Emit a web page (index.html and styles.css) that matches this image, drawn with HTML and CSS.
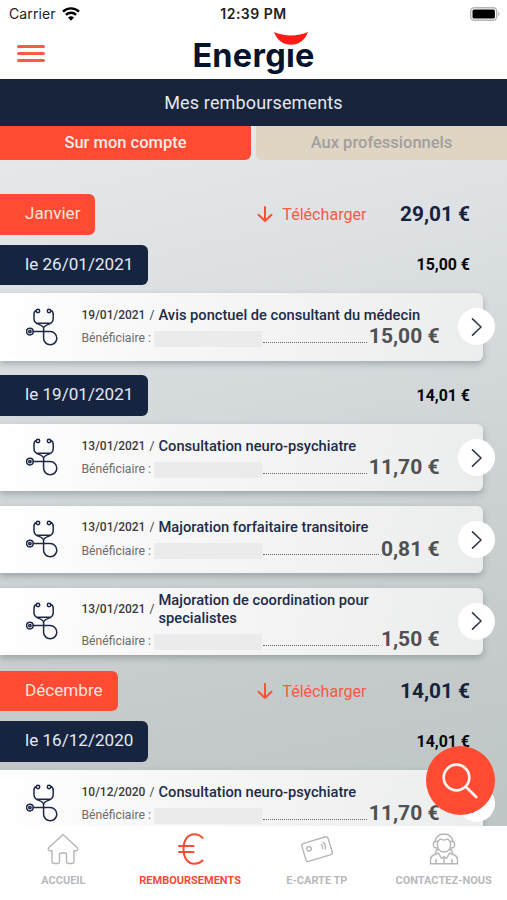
FILE: index.html
```
<!DOCTYPE html>
<html lang="fr">
<head>
    <meta charset="utf-8">
    <title>Mes remboursements</title>
    <link rel="stylesheet" href="styles.css">
</head>
<body>
    <svg class="sprite">
        <symbol id="stethoscope" viewBox="0 0 32 38">
            <circle cx="12" cy="3" r="1.7"/>
            <circle cx="23" cy="3" r="1.7"/>
            <path d="M10.400 2.400C8.400 2.700 8 4.600 8 6.500v4.300c0 3 2.200 4.700 4.800 5.600 2.500.9 4.800 1.900 4.800 4.200 0-2.300 2.300-3.300 4.800-4.200 2.600-.9 4.800-2.600 4.800-5.600V6.500c0-1.900-.4-3.800-2.400-4.100M11.500 15.300h12.200M17.600 20v10.200a6.600 6.600 0 1 0 6.600-6.600H7.300"/>
            <circle cx="3.900" cy="23.600" r="3.300"/>
            <circle cx="3.900" cy="23.600" r="1.200"/>
        </symbol>
        <symbol id="chevron" viewBox="0 0 12 20">
            <path d="M1.500 1.800l8.500 8.200-8.500 8.200"/>
        </symbol>
        <symbol id="download" viewBox="0 0 16 18">
            <path d="M8 2v14M1.500 9.800L8 16l6.500-6.200"/>
        </symbol>
    </svg>

    <div class="status-bar">
        <span class="carrier">Carrier
            <svg class="wifi" viewBox="0 0 18 14">
                <path d="M1 4.700a11.300 11.300 0 0 1 16 0M3.900 7.800a7.200 7.200 0 0 1 10.200 0"/>
                <path class="solid" d="M9 13.800l-3-3.200a4.300 4.300 0 0 1 6 0z"/>
            </svg>
        </span>
        <span class="time">12:39 PM</span>
        <span class="battery">
            <svg viewBox="0 0 30 14">
                <rect x=".7" y=".7" width="26" height="12.600" rx="3.500" fill="#fff" stroke="#b5b5b5" stroke-width="1.400"/>
                <rect x="2.500" y="2.500" width="22.400" height="9" rx="1.500"/>
                <path d="M28.200 4.800c1.600.6 1.600 3.800 0 4.400z" fill="#b5b5b5"/>
            </svg>
        </span>
    </div>

    <header class="header">
        <button class="menu-btn"><span></span><span></span><span></span></button>
        <div class="logo">
            Energıe
            <svg class="smile" viewBox="0 0 34 13"><path d="M0 0c10 4.500 24 4.500 34 0-3 8.500-9.500 12.800-17 12.800S3 8.500 0 0z"/></svg>
        </div>
    </header>

    <h1 class="page-title">Mes remboursements</h1>

    <main class="content">
        <div class="tabs">
            <button class="tab active">Sur mon compte</button>
            <button class="tab">Aux professionnels</button>
        </div>

        <div class="month">
            <span class="tag month-tag">Janvier</span>
            <a class="download"><svg><use href="#download"/></svg>Télécharger</a>
            <span class="month-total">29,01 €</span>
        </div>
        <div class="day">
            <span class="tag day-tag">le 26/01/2021</span>
            <span class="day-total">15,00 €</span>
        </div>
        <div class="card">
            <svg class="care-icon"><use href="#stethoscope"/></svg>
            <div class="card-body">
                <div class="card-title"><span class="date">19/01/2021 <i>/</i></span><span class="care">Avis ponctuel de consultant du médecin</span></div>
                <div class="card-line"><span class="label">Bénéficiaire :</span><span class="mask"></span><span class="dots"></span><span class="amount">15,00 €</span></div>
            </div>
            <button class="more"><svg><use href="#chevron"/></svg></button>
        </div>

        <div class="day">
            <span class="tag day-tag">le 19/01/2021</span>
            <span class="day-total">14,01 €</span>
        </div>
        <div class="card">
            <svg class="care-icon"><use href="#stethoscope"/></svg>
            <div class="card-body">
                <div class="card-title"><span class="date">13/01/2021 <i>/</i></span><span class="care">Consultation neuro-psychiatre</span></div>
                <div class="card-line"><span class="label">Bénéficiaire :</span><span class="mask"></span><span class="dots"></span><span class="amount">11,70 €</span></div>
            </div>
            <button class="more"><svg><use href="#chevron"/></svg></button>
        </div>
        <div class="card">
            <svg class="care-icon"><use href="#stethoscope"/></svg>
            <div class="card-body">
                <div class="card-title"><span class="date">13/01/2021 <i>/</i></span><span class="care">Majoration forfaitaire transitoire</span></div>
                <div class="card-line"><span class="label">Bénéficiaire :</span><span class="mask"></span><span class="dots"></span><span class="amount">0,81 €</span></div>
            </div>
            <button class="more"><svg><use href="#chevron"/></svg></button>
        </div>
        <div class="card">
            <svg class="care-icon"><use href="#stethoscope"/></svg>
            <div class="card-body two-lines">
                <div class="card-title"><span class="date">13/01/2021 <i>/</i></span><span class="care">Majoration de coordination pour<br>specialistes</span></div>
                <div class="card-line"><span class="label">Bénéficiaire :</span><span class="mask"></span><span class="dots"></span><span class="amount">1,50 €</span></div>
            </div>
            <button class="more"><svg><use href="#chevron"/></svg></button>
        </div>

        <div class="month">
            <span class="tag month-tag">Décembre</span>
            <a class="download"><svg><use href="#download"/></svg>Télécharger</a>
            <span class="month-total">14,01 €</span>
        </div>
        <div class="day">
            <span class="tag day-tag">le 16/12/2020</span>
            <span class="day-total">14,01 €</span>
        </div>
        <div class="card">
            <svg class="care-icon"><use href="#stethoscope"/></svg>
            <div class="card-body">
                <div class="card-title"><span class="date">10/12/2020 <i>/</i></span><span class="care">Consultation neuro-psychiatre</span></div>
                <div class="card-line"><span class="label">Bénéficiaire :</span><span class="mask"></span><span class="dots"></span><span class="amount">11,70 €</span></div>
            </div>
            <button class="more"><svg><use href="#chevron"/></svg></button>
        </div>
    </main>

    <button class="search-btn">
        <svg viewBox="0 0 36 36"><circle cx="14.500" cy="14.500" r="12.800"/><path d="M23.800 23.800L34.200 34"/></svg>
    </button>

    <nav class="nav">
        <a class="nav-item">
            <svg viewBox="0 0 32 32"><path d="M16 1.500L2 14.500c-1.600 1.600-.6 3.300 1 3.300h2v10.400c0 1.400.8 2.300 2.200 2.300h3.600c1.200 0 1.700-.7 1.700-1.700v-7.300c0-.9.5-1.500 1.500-1.500h4c1 0 1.500.6 1.500 1.500v7.300c0 1 .5 1.700 1.700 1.700h3.600c1.400 0 2.200-.9 2.200-2.300V17.800h2c1.600 0 2.600-1.700 1-3.300z"/></svg>
            ACCUEIL
        </a>
        <a class="nav-item active">
            <svg class="euro" viewBox="0 0 32 32"><path d="M28.500 4.800C26 2.200 23.500 1.200 20.500 1.200c-7 0-11 6-11 14.800s4 14.800 11 14.800c3 0 5.500-.8 8-3.300M5 13h14.500M5 19h14.500"/></svg>
            REMBOURSEMENTS
        </a>
        <a class="nav-item">
            <svg viewBox="0 0 32 32"><g transform="rotate(-17 16 16)"><rect x="2.300" y="6.800" width="27.400" height="18.600" rx="2"/><circle cx="8.500" cy="13.500" r="2.200"/><path d="M21.500 13q1.400 2 0 4M23.800 11.500q2.400 3.500 0 7"/></g></svg>
            E-CARTE TP
        </a>
        <a class="nav-item">
            <svg viewBox="0 0 32 32"><path d="M7 8.500C8 4 11.500 1 16 1s8 3 9 7.500M9.500 10.500c0-3 1.500-3.500 3-4.500 2.300 1.300 4.700 1.300 7 0 1.500 1 3 1.500 3 4.500v2.500c0 3.500-3 6-6.500 6s-6.500-2.500-6.500-6zM9.500 8.500H8C6.300 8.500 5.300 10 5.300 11.500s1 3.500 2.700 3.500h1.500M22.500 8.500H24c1.700 0 2.700 1.500 2.700 3s-1 3.500-2.700 3.500h-1.500M10 16.500c-2 .5-2.500 2-2.500 4.500M22 16.500c2 .5 2.500 2 2.500 4.500M10.500 20L5.500 22C3.500 23 2.500 24.500 2.500 27v3.800h27V27c0-2.500-1-4-3-5l-5-2M10.500 20l3 5.500 2.500-2 2.500 2 3-5.500M16 23.500v7M8 26.500v4M24 26.500v4"/></svg>
            CONTACTEZ-NOUS
        </a>
    </nav>
</body>
</html>
```

FILE: styles.css
```
* {
    box-sizing: border-box;
}
body {
    margin: 0;
    width: 507px;
    height: 900px;
    overflow: hidden;
    display: flex;
    flex-direction: column;
    background: #fff;
    font-family: Roboto, sans-serif;
    position: relative;
}
button {
    border: none;
    padding: 0;
    font-family: inherit;
}
svg {
    fill: none;
    stroke-linecap: round;
    stroke-linejoin: round;
}
.sprite {
    display: none;
}
.status-bar {
    height: 27px;
    padding: 0 7px 0 9px;
    display: grid;
    grid-template-columns: 1fr auto 1fr;
    align-items: center;
    font-family: Inter, sans-serif;
    font-size: 14px;
    color: #222;
}
.carrier {
    display: flex;
    align-items: center;
    gap: 6px;
    letter-spacing: 0.1px;
}
.wifi {
    width: 18px;
    height: 14px;
    stroke: #000;
    stroke-width: 2.4;
    stroke-linecap: butt;
}
.wifi .solid {
    fill: #000;
    stroke: none;
}
.time {
    margin-right: 2px;
    font-weight: 600;
    font-size: 14px;
    letter-spacing: 0.5px;
}
.battery {
    display: flex;
    justify-content: flex-end;
}
.battery svg {
    width: 30px;
    height: 14px;
    fill: #000;
}
.header {
    height: 52px;
    flex: none;
    padding: 0 17px;
    display: grid;
    grid-template-columns: 1fr auto 1fr;
    align-items: center;
}
.menu-btn {
    width: 28px;
    margin-bottom: 2px;
    display: flex;
    flex-direction: column;
    gap: 4.700px;
    background: none;
}
.menu-btn span {
    height: 2.500px;
    border-radius: 2px;
    background: #fb5a47;
}
.logo {
    position: relative;
    font-family: Inter, sans-serif;
    font-size: 32.500px;
    line-height: 52px;
    padding-top: 3px;
    font-weight: 700;
    letter-spacing: 0.250px;
    color: #06142b;
}
.smile {
    position: absolute;
    top: 5px;
    right: 7px;
    width: 34px;
    height: 13px;
    fill: #fb1c17;
}
.page-title {
    margin: 0;
    height: 46.500px;
    flex: none;
    background: #18243b;
    color: #e4e8f0;
    font-size: 18px;
    font-weight: 400;
    line-height: 47px;
    text-align: center;
    letter-spacing: 0.140px;
}
.content {
    flex: 1;
    min-height: 0;
    overflow: hidden;
    background: linear-gradient(168deg, #e6eaed 0%, #dce0e3 25%, #cdd2d4 55%, #c4caca 80%, #bec5c6 100%);
}
.tabs {
    display: flex;
    gap: 5px;
    margin-bottom: 34.500px;
}
.tab {
    flex: 1;
    height: 34px;
    background: #e0d5c3;
    color: #a19f9d;
    font-size: 16.500px;
    font-weight: 500;
    padding-bottom: 1px;
    border-radius: 0 0 0 6px;
}
.tab.active {
    background: #ff4b33;
    color: #ffeae5;
    border-radius: 0 0 6px 0;
}
.month,
.day {
    display: flex;
    align-items: center;
    height: 40.500px;
    padding-right: 37px;
}
.month {
    margin-bottom: 10px;
}
.day {
    margin-bottom: 8.400px;
}
.tag {
    height: 40.500px;
    line-height: 39.500px;
    padding: 0 15px 0 25px;
    border-radius: 0 6px 6px 0;
    font-size: 17.100px;
    color: #ffe3dd;
}
.month-tag {
    background: #ff4b33;
}
.day-tag {
    background: #16243f;
    color: #e4e9f2;
}
.download {
    display: flex;
    align-items: center;
    gap: 9.500px;
    margin-left: auto;
    margin-right: 0.500px;
    font-size: 16.100px;
    color: #f75a45;
}
.download svg {
    width: 16px;
    height: 18px;
    stroke: #f9513b;
    stroke-width: 2;
}
.month-total {
    width: 103px;
    text-align: right;
    font-size: 20.800px;
    font-weight: 700;
    color: #17223c;
}
.day-total {
    margin-left: auto;
    font-size: 15.900px;
    font-weight: 700;
    color: #080808;
}
.card {
    position: relative;
    display: flex;
    align-items: center;
    width: 483px;
    height: 67.300px;
    margin-bottom: 14.600px;
    padding: 0 0 1px 26px;
    background: linear-gradient(100deg, #fff 0%, #f7f7f7 35%, #eceded 100%);
    border-radius: 0 6px 6px 0;
    box-shadow: 0 3px 6px rgba(60, 70, 75, 0.32);
}
.card + .month {
    margin-top: 15.500px;
}
.care-icon {
    width: 32px;
    height: 38px;
    stroke: #1d2846;
    stroke-width: 1.500;
}
.card-body {
    width: 358px;
    margin: 0 0 0.500px 23.500px;
}
.card-title {
    display: flex;
    align-items: center;
    height: 20px;
}
.date {
    width: 77px;
    font-size: 12px;
    font-weight: 500;
    color: #3b3b3d;
}
.date i {
    font-weight: 400;
    font-style: normal;
    margin-left: 1px;
}
.care {
    font-size: 14.680px;
    line-height: 18px;
    font-weight: 500;
    color: #202b49;
    white-space: nowrap;
}
.card-line {
    display: flex;
    align-items: center;
    height: 23px;
}
.label {
    width: 72px;
    padding-top: 4px;
    font-size: 12.200px;
    color: #6c6c6e;
    white-space: nowrap;
}
.mask {
    width: 108px;
    height: 16px;
    margin-top: 5px;
    background: #ebebec;
    border-radius: 1px;
}
.dots {
    flex: 1;
    height: 13px;
    margin-left: 1px;
    border-bottom: 1px dotted #666;
}
.amount {
    margin-left: 2px;
    font-size: 21px;
    line-height: 22px;
    font-weight: 700;
    color: #515152;
}
.two-lines .card-title {
    height: 37px;
}
.more {
    position: absolute;
    right: -12px;
    top: 15px;
    width: 37px;
    height: 37px;
    border-radius: 50%;
    background: #fff;
    display: flex;
    align-items: center;
    justify-content: center;
}
.more svg {
    width: 12px;
    height: 20px;
    stroke: #33384a;
    stroke-width: 1.600;
}
.search-btn {
    position: absolute;
    right: 12px;
    bottom: 85px;
    width: 69px;
    height: 69px;
    border-radius: 50%;
    background: #ff4b33;
    display: flex;
    align-items: center;
    justify-content: center;
}
.search-btn svg {
    width: 36px;
    height: 36px;
    margin-right: 1px;
    stroke: #fff3ee;
    stroke-width: 2.700;
}
.nav {
    height: 74px;
    flex: none;
    display: flex;
    background: #fff;
}
.nav-item {
    flex: 1 1 0;
    display: flex;
    flex-direction: column;
    align-items: center;
    gap: 9px;
    padding-top: 7px;
    font-size: 11px;
    font-weight: 700;
    color: #b9b9bb;
}
.nav-item svg {
    width: 32px;
    height: 32px;
    stroke: #b5b5b7;
    stroke-width: 1.400;
}
.nav-item.active {
    color: #fb4b34;
}
.nav-item .euro {
    stroke: #fb4b34;
    stroke-width: 2;
}
```
